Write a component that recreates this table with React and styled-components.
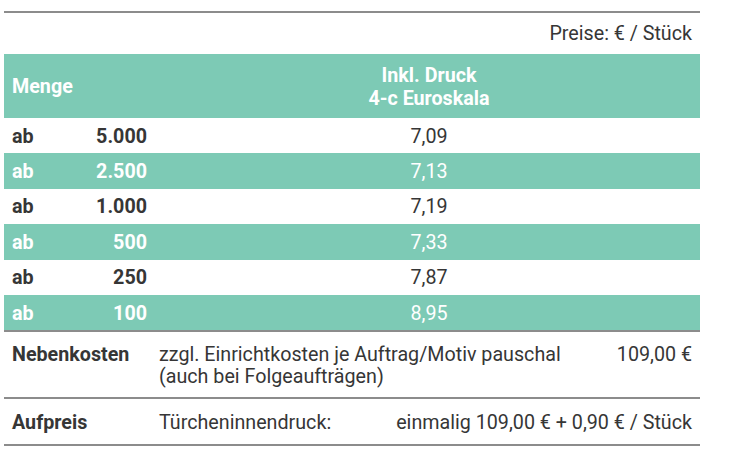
import React from "react";
import styled, { createGlobalStyle } from "styled-components";

const GlobalStyle = createGlobalStyle`
  html, body {
    margin: 0;
    padding: 0;
    background: #ffffff;
  }
  body {
    font-family: Roboto, "Liberation Sans", sans-serif;
    color: #363636;
  }
`;

const GREEN = "#7dcab5";
const LINE = "#8c8c8c";

const Sheet = styled.div`
  width: 696px;
  margin: 11px 0 0 4px;
  border-top: 2px solid ${LINE};
  font-size: 19.7px;
`;

const PriceNote = styled.div`
  height: 41px;
  display: flex;
  align-items: center;
  justify-content: flex-end;
  padding-right: 8px;
`;

const Grid = styled.div`
  display: grid;
  grid-template-columns: 63px 91px 1fr;
  align-items: center;
  background: ${(p) => (p.$green ? GREEN : "#ffffff")};
  color: ${(p) => (p.$green ? "#ffffff" : "#363636")};
  height: ${(p) => p.$height || 35}px;
  padding-top: 1px;
  box-sizing: border-box;
`;

const HeadCell = styled.div`
  font-weight: 700;
  color: #ffffff;
  padding-left: ${(p) => (p.$center ? 0 : 8)}px;
  text-align: ${(p) => (p.$center ? "center" : "left")};
  line-height: 23px;
  grid-column: ${(p) => p.$span || "auto"};
`;

const Ab = styled.div`
  font-weight: 700;
  padding-left: 8px;
`;

const Qty = styled.div`
  font-weight: 700;
  text-align: right;
  padding-right: 11px;
`;

const Price = styled.div`
  text-align: center;
`;

const Extra = styled.div`
  display: grid;
  grid-template-columns: 155px 1fr auto;
  align-items: start;
  border-top: 2px solid ${LINE};
  padding: ${(p) => p.$pad};
  line-height: 22px;
`;

const Label = styled.div`
  font-weight: 700;
  padding-left: 8px;
`;

const Amount = styled.div`
  text-align: right;
  padding-right: 8px;
`;

const BottomLine = styled.div`
  border-top: 2px solid ${LINE};
`;

const rows = [
  ["5.000", "7,09"],
  ["2.500", "7,13"],
  ["1.000", "7,19"],
  ["500", "7,33"],
  ["250", "7,87"],
  ["100", "8,95"],
];

export default function App() {
  return (
    <>
      <GlobalStyle />
      <Sheet>
        <PriceNote>Preise: € / Stück</PriceNote>
        <Grid $green $height={64}>
          <HeadCell $span="1 / 3">Menge</HeadCell>
          <HeadCell $center>
            Inkl. Druck
            <br />
            4-c Euroskala
          </HeadCell>
        </Grid>
        {rows.map(([qty, price], i) => (
          <Grid key={qty} $green={i % 2 === 1} $height={35.4}>
            <Ab>ab</Ab>
            <Qty>{qty}</Qty>
            <Price>{price}</Price>
          </Grid>
        ))}
        <Extra $pad="12px 0 9px">
          <Label>Nebenkosten</Label>
          <div>
            zzgl. Einrichtkosten je Auftrag/Motiv pauschal
            <br />
            (auch bei Folgeaufträgen)
          </div>
          <Amount>109,00 €</Amount>
        </Extra>
        <Extra $pad="13px 0 10px">
          <Label>Aufpreis</Label>
          <div>Türcheninnendruck:</div>
          <Amount>einmalig 109,00 € + 0,90 € / Stück</Amount>
        </Extra>
        <BottomLine />
      </Sheet>
    </>
  );
}
